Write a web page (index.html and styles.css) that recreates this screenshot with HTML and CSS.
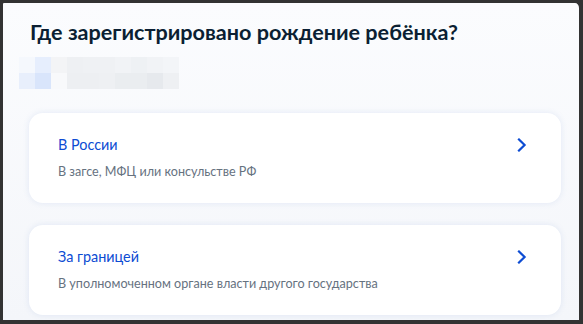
FILE: index.html
```html
<!DOCTYPE html>
<html lang="ru">
<head>
<meta charset="utf-8">
<link rel="stylesheet" href="styles.css">
</head>
<body>
<div class="frame">
  <h1 class="title">Где зарегистрировано рождение ребёнка?</h1>
  <div class="pixels">
    <span class="px p1"></span><span class="px p2"></span><span class="px p3"></span><span class="px p4"></span><span class="px p5"></span><span class="px p6"></span><span class="px p7"></span><span class="px p8"></span><span class="px p9"></span><span class="px p10"></span>
    <span class="px p11"></span><span class="px p12"></span><span class="px p13"></span><span class="px p14"></span><span class="px p15"></span><span class="px p16"></span><span class="px p17"></span><span class="px p18"></span><span class="px p19"></span><span class="px p20"></span>
  </div>
  <div class="cards">
    <a class="card" href="#">
      <div class="card-head">
        <span class="card-title">В России</span>
        <svg class="chev" width="10" height="14" viewBox="0 0 10 14"><path d="M2 1.5 L7.6 7 L2 12.5" fill="none" stroke="#0d4cd3" stroke-width="2.2" stroke-linecap="square"/></svg>
      </div>
      <div class="card-sub">В загсе, МФЦ или консульстве РФ</div>
    </a>
    <a class="card" href="#">
      <div class="card-head">
        <span class="card-title">За границей</span>
        <svg class="chev" width="10" height="14" viewBox="0 0 10 14"><path d="M2 1.5 L7.6 7 L2 12.5" fill="none" stroke="#0d4cd3" stroke-width="2.2" stroke-linecap="square"/></svg>
      </div>
      <div class="card-sub">В уполномоченном органе власти другого государства</div>
    </a>
  </div>
</div>
</body>
</html>
```

FILE: styles.css
```css
* { box-sizing: border-box; }
html, body { margin: 0; padding: 0; }
body {
  width: 583px;
  height: 324px;
  overflow: hidden;
  background: #333;
  font-family: Lato, "Noto Sans", sans-serif;
}
.frame {
  width: 583px;
  height: 324px;
  border-style: solid;
  border-color: #333;
  border-width: 3px 4px 4px 3px;
  border-radius: 4px 8px 4px 4px;
  background: linear-gradient(180deg, #fbfcfe 0%, #f4f6fa 100%);
  padding: 15px 18px 0 26px;
  overflow: hidden;
}
.title {
  margin: 0 0 0 1px;
  font-size: 21.6px;
  line-height: 28px;
  font-weight: 700;
  color: #0b1f33;
}
.pixels {
  margin: 11px 0 0 -10px;
  display: grid;
  grid-template-columns: repeat(10, 16px);
  grid-template-rows: 16px 16px;
}
.px { display: block; }
.p1 { background: #f5f8fd; }
.p2 { background: #e6eefd; }
.p3 { background: #f3f4f6; }
.p4 { background: #eef0f3; }
.p5 { background: #eff1f4; }
.p6 { background: #eff1f4; }
.p7 { background: #f1f3f6; }
.p8 { background: #eef1f4; }
.p9 { background: #f1f3f6; }
.p10 { background: #f3f5f8; }
.p11 { background: #e8effc; }
.p12 { background: #d9e5fb; }
.p13 { background: #f8f9fb; }
.p14 { background: #edeff2; }
.p15 { background: #edeff2; }
.p16 { background: #eef0f3; }
.p17 { background: #eaedf0; }
.p18 { background: #eaedf0; }
.p19 { background: #e6e9ed; }
.p20 { background: #eef0f3; }
.cards {
  margin-top: 24px;
  display: flex;
  flex-direction: column;
  gap: 22px;
}
.card {
  display: block;
  height: 90px;
  background: #fff;
  border-radius: 14px;
  box-shadow: 0 0 6px rgba(90, 130, 200, 0.14);
  padding: 22px 34px 0 29px;
  text-decoration: none;
}
.card-head {
  display: flex;
  justify-content: space-between;
  align-items: center;
  height: 20px;
}
.card-title {
  font-size: 14.4px;
  line-height: 20px;
  color: #0d4cd3;
}
.chev { display: block; margin-top: -1px; }
.card-sub {
  margin-top: 7.5px;
  font-size: 12.6px;
  line-height: 18px;
  color: #66727f;
}
```
